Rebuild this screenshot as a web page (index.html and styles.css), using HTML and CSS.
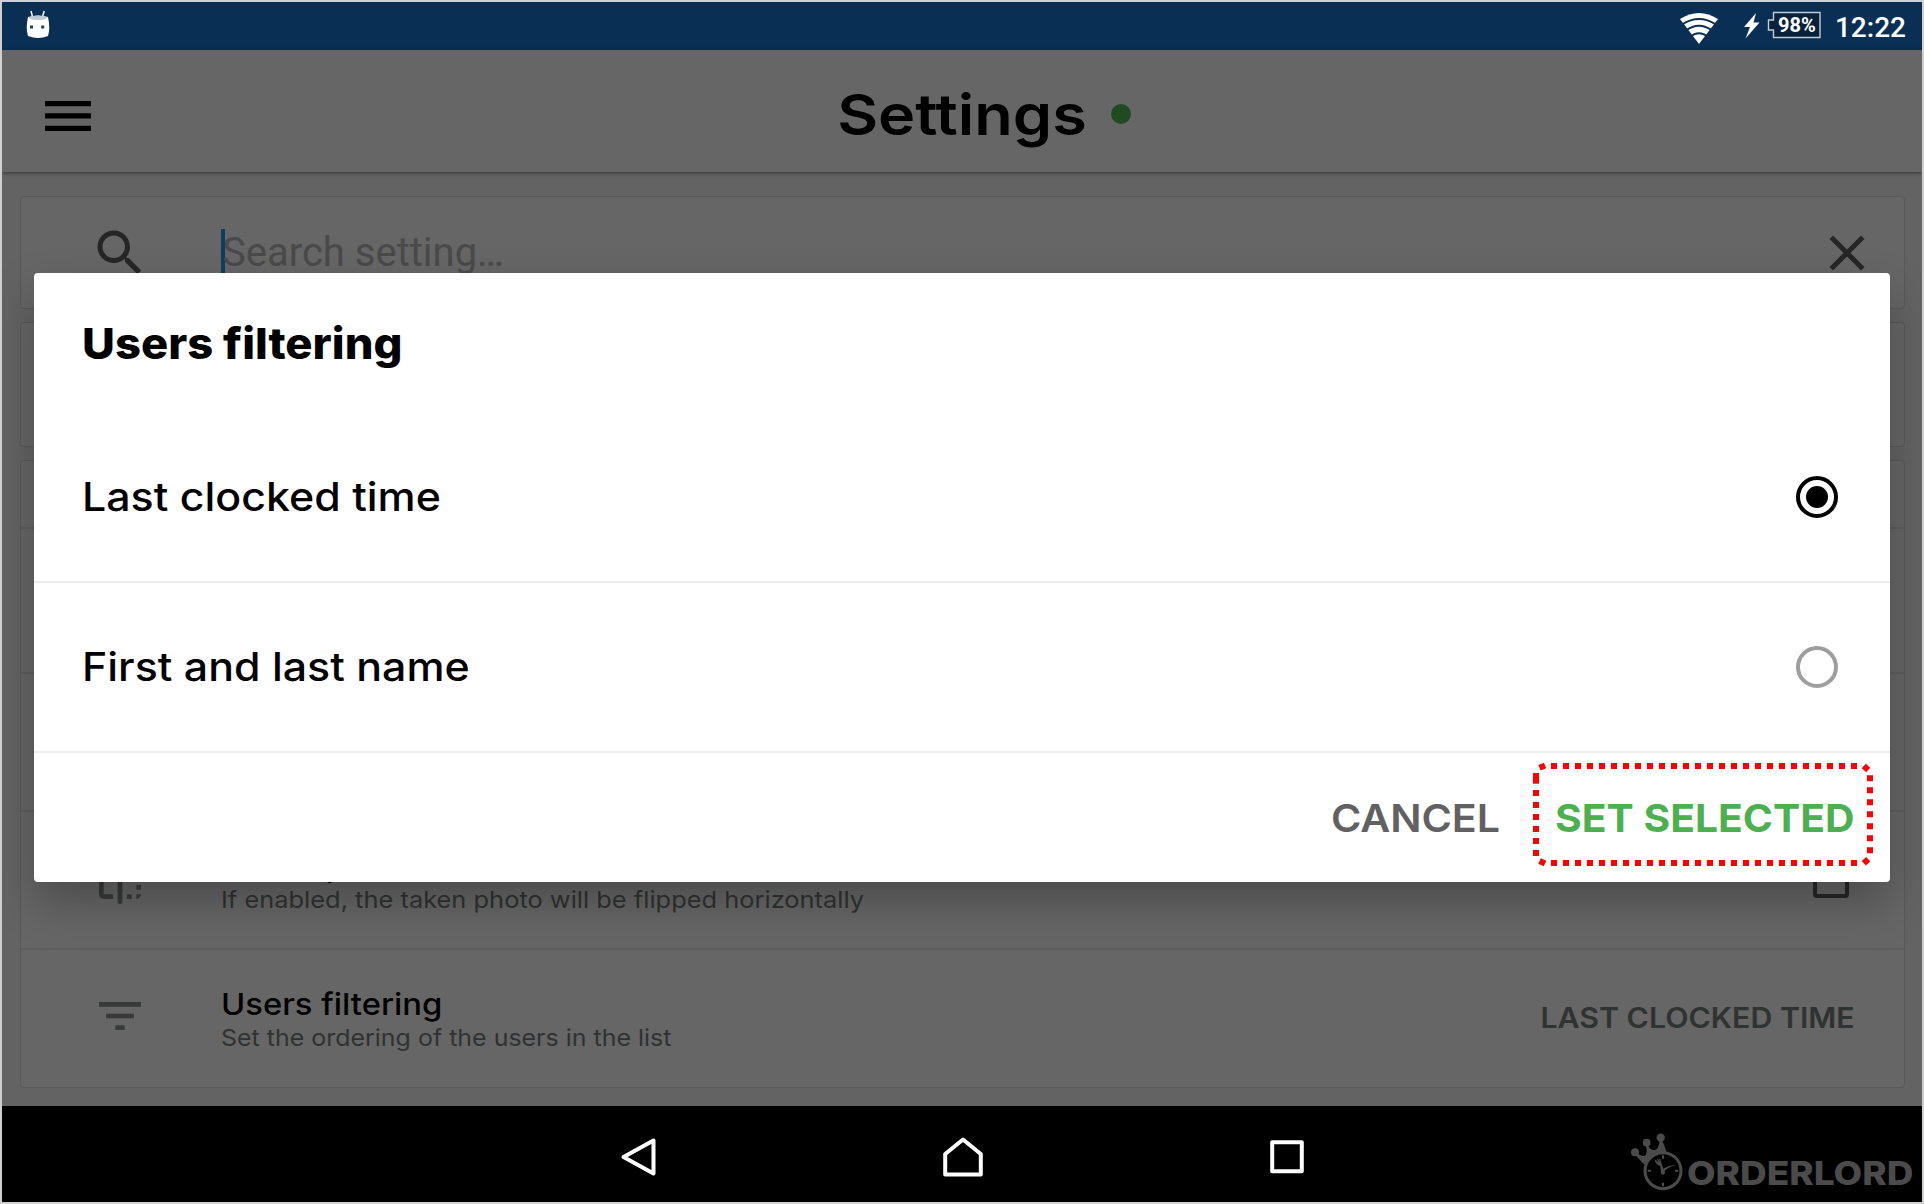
FILE: index.html
```html
<!DOCTYPE html>
<html lang="en">
<head>
<meta charset="utf-8">
<title>Settings</title>
<link rel="stylesheet" href="styles.css">
</head>
<body>
<div class="device">
  <header class="status">
    <svg class="status-robot" width="24" height="29" viewBox="0 0 24 29">
      <path d="M5 1l1.300 5M18.200 1l-1.500 5" stroke="#fff" stroke-width="1.500" fill="none"/>
      <path d="M2 7Q12 4 22 7Q24.500 18 22 26Q12 30 2 26Q-.500 18 2 7z" fill="#fff"/>
      <path d="M2.500 7.500Q12 3.500 21.500 7.500Q19 10 12 10T2.500 7.500z" fill="#bcc8d6"/>
      <path d="M4 15.500h3v3H4zM15.200 15.500h3v3h-3z" fill="#1c3f63"/>
    </svg>
    <div class="status-right">
      <svg class="wifi" width="40" height="33" viewBox="0 0 40 33">
        <path d="M1 7Q20-5 39 7L20 32z" fill="#fff"/>
        <path d="M3 12.500Q20 1.500 37 12.500M7 18.500Q20 9 33 18.500M11 25Q20 17.500 29 25" stroke="#0a2f54" stroke-width="2" fill="none"/>
      </svg>
      <svg class="bolt" width="16" height="26" viewBox="0 0 16 26"><path d="M12 0L0 14h6L1.500 25.500L15.500 9.500H9.500z" fill="#fff"/></svg>
      <div class="battery">
        <svg width="55" height="28" viewBox="0 0 55 28"><path d="M6.500 1.500h46.500v25H6.500v-7.500h-5v-10h5z" fill="#08223b" stroke="#c3ccd6" stroke-width="1.400"/></svg>
        <span class="battery-level">98%</span>
      </div>
      <span class="clock">12:22</span>
    </div>
  </header>

  <div class="toolbar">
    <svg class="menu" width="46" height="30" viewBox="0 0 46 30"><path d="M0 0h46v5.300H0zM0 12.300h46v5.300H0zM0 24.700h46v5.300H0z"/></svg>
    <h1 class="toolbar-title"><span class="wide">Settings</span><i class="online"></i></h1>
  </div>

  <main class="content">
    <section class="card search">
      <svg class="row-icon" width="60" height="60" viewBox="0 0 24 24"><path class="dark" d="M15.500 14h-.79l-.28-.27C15.410 12.590 16 11.110 16 9.500 16 5.910 13.090 3 9.500 3S3 5.910 3 9.500 5.910 16 9.500 16c1.610 0 3.090-.59 4.230-1.570l.27.28v.79l5 4.990L20.490 19l-4.990-5zm-6 0C7.010 14 5 11.990 5 9.500S7.010 5 9.500 5 14 7.010 14 9.500 11.990 14 9.500 14z"/></svg>
      <div class="search-field">Search setting…</div>
      <svg class="clear" width="60" height="60" viewBox="0 0 24 24"><path class="dark" d="M19 6.410L17.590 5 12 10.590 6.410 5 5 6.410 10.590 12 5 17.590 6.410 19 12 13.410 17.590 19 19 17.590 13.410 12z"/></svg>
    </section>
    <section class="card plain"></section>
    <section class="card list">
      <div class="row row-short"></div>
      <div class="row row-tall"></div>
      <div class="row"></div>
      <div class="row">
        <svg class="row-icon raised" width="56" height="56" viewBox="0 0 24 24"><path d="M15 21h2v-2h-2v2zm4-12h2V7h-2v2zM3 5v14c0 1.100.9 2 2 2h4v-2H5V5h4V3H5c-1.100 0-2 .9-2 2zm16-2v2h2c0-1.100-.9-2-2-2zm-8 20h2V1h-2v22zm8-6h2v-2h-2v2zM15 5h2V3h-2v2zm4 8h2v-2h-2v2zm0 8c1.100 0 2-.9 2-2h-2v2z"/></svg>
        <div class="row-text">
          <div class="row-title"><span class="wide">Mirror photo</span></div>
          <div class="row-sub"><span class="wide">If enabled, the taken photo will be flipped horizontally</span></div>
        </div>
        <i class="checkbox"></i>
      </div>
      <div class="row">
        <svg class="row-icon raised" width="56" height="56" viewBox="0 0 24 24"><path d="M10 18h4v-2h-4v2zM3 6v2h18V6H3zm3 7h12v-2H6v2z"/></svg>
        <div class="row-text">
          <div class="row-title"><span class="wide">Users filtering</span></div>
          <div class="row-sub"><span class="wide short">Set the ordering of the users in the list</span></div>
        </div>
        <span class="row-value">LAST CLOCKED TIME</span>
      </div>
    </section>
  </main>

  <nav class="navbar">
    <svg width="40" height="40" viewBox="0 0 40 40"><path d="M34.500 3.500v33L4.500 20z"/></svg>
    <svg width="40" height="40" viewBox="0 0 40 40"><path d="M2.200 37.500V17L20 2.500 37.800 17v20.500z"/></svg>
    <svg width="40" height="40" viewBox="0 0 40 40"><path d="M5.200 5.200h29.600v29H5.200z"/></svg>
    <div class="brand">
      <svg width="60" height="68" viewBox="0 0 180 204" fill="#4b4b4b">
        <circle cx="30" cy="73" r="12"/><circle cx="65" cy="44" r="11.500"/><circle cx="107" cy="29" r="12.500"/>
        <path d="M28 78L62 114Q78 76 125 73L111 34H104Q103 62 90 66Q76 68 68 50H62Q70 78 58 84Q46 86 35 72z"/>
        <circle cx="114" cy="128" r="54" fill="#000" stroke="#4b4b4b" stroke-width="9"/>
        <path d="M114 82v10M114 164v11M68 128h10M150 128h10" stroke="#4b4b4b" stroke-width="6"/>
        <path d="M107 110L114 134Q128 117 152 112Q132 110 114 124L108 110z"/>
        <path d="M108 134a6 6 0 1 0 12 0L111 110 106 94 102 92 105 103 99 92 96 94 101 105 92 95 89 99 97 110 106 114z"/>
      </svg>
      <span class="brand-name">ORDERLORD</span>
    </div>
  </nav>

  <div class="dialog" role="dialog">
    <h2 class="dialog-title"><span class="wide">Users filtering</span></h2>
    <div class="option"><span class="wide">Last clocked time</span><i class="radio checked"></i></div>
    <div class="option"><span class="wide">First and last name</span><i class="radio"></i></div>
    <div class="actions">
      <span class="action cancel">CANCEL</span>
      <span class="action confirm">SET SELECTED</span>
      <svg class="highlight" width="342" height="105" viewBox="0 0 342 105">
        <g stroke="#f00" stroke-width="6" fill="none" stroke-dasharray="6 6">
          <path d="M19 4H325M19 101H325M338 13.300V92M4 28V95"/>
        </g>
        <path fill="#f00" d="M1 11h6v10.700H1z"/>
        <g fill="#f00">
          <rect x="7.300" y="1.700" width="6" height="6" transform="rotate(-22 10.300 4.700)"/>
          <rect x="331" y="3" width="6" height="6" transform="rotate(42 334 6)"/>
          <rect x="331" y="96.300" width="6" height="6" transform="rotate(-42 334 99.300)"/>
          <rect x="7.300" y="97.300" width="6" height="6" transform="rotate(25 10.300 100.300)"/>
        </g>
      </svg>
    </div>
  </div>
</div>
</body>
</html>
```
FILE: styles.css
```css
* { box-sizing: border-box; }
body { margin: 0; font-family: Inter, "Open Sans", sans-serif; color: #000; }
h1, h2 { margin: 0; }

.device {
  position: relative;
  display: flex;
  flex-direction: column;
  width: 1924px;
  height: 1204px;
  border: 2px solid #d0d0d0;
  background: #636363;
  overflow: hidden;
}

/* horizontally extended lettering */
.wide { display: inline-block; white-space: nowrap; transform: scaleX(1.075); transform-origin: left center; }

/* status bar */
.status {
  display: flex;
  justify-content: space-between;
  flex: none;
  height: 48px;
  padding: 0 16px 0 24px;
  background: #0a2f54;
  color: #fff;
  font-family: Roboto, sans-serif;
}
.status-robot { margin-top: 8px; }
.status-right { display: flex; align-items: flex-start; }
.wifi { margin-top: 10px; }
.bolt { margin: 11px 7px 0 25px; }
.battery { position: relative; width: 55px; height: 28px; margin-top: 9px; }
.battery svg { display: block; }
.battery-level { position: absolute; left: 11px; top: 2px; font-size: 20px; line-height: 24px; font-weight: 700; }
.clock { margin: 10px 0 0 13px; font-size: 28px; line-height: 32px; font-weight: 500; }

/* toolbar */
.toolbar {
  position: relative;
  z-index: 1;
  display: grid;
  grid-template-columns: 1fr 252px 1fr;
  align-items: center;
  flex: none;
  height: 122px;
  padding: 0 43px;
  background: #666;
  box-shadow: 0 1px 4px rgba(0, 0, 0, .45);
}
.menu { margin-top: 9px; }
.toolbar-title { position: relative; padding-top: 8px; font-size: 57px; line-height: 70px; font-weight: 600; text-align: center; }
.toolbar-title .wide { transform: scaleX(1.105); transform-origin: center; }
.online { position: absolute; left: 275px; top: 32px; width: 20px; height: 20px; border-radius: 50%; background: #1f4a22; }

/* settings cards */
.content { display: flex; flex-direction: column; gap: 13px; flex: 1; padding: 24px 17px 18px 18px; }
.card { border: 1px solid #595959; border-radius: 4px; background: #666; }
.search { display: grid; grid-template-columns: 200px 1fr auto; align-items: center; height: 113px; padding-right: 27px; }
.row-icon { justify-self: center; fill: #393b3b; transform: translateX(-1px); }
.dark { fill: #262626; }
.raised { margin-bottom: 4px; }
.search-field { height: 48px; border-left: 4px solid #0d3d66; font: 40px/48px Roboto, sans-serif; color: #4a4a4a; text-indent: -3px; }
.plain { height: 125px; }
.list { flex: 1; }
.row { display: grid; grid-template-columns: 200px 1fr auto; align-items: center; height: 138px; padding-right: 49px; border-bottom: 2px solid #5e5e5e; }
.row-short { height: 68px; }
.row-tall { height: 145px; }
.row:last-child { height: 136px; border-bottom: 0; }
.row-title { font-size: 30.500px; line-height: 38px; font-weight: 500; }
.row-sub { padding-top: 1px; font-size: 23.500px; line-height: 28px; color: #303232; }
.row-sub .wide { transform: scaleX(1.082); }
.row-sub .short { transform: scaleX(1.062); }
.row-value { margin-bottom: 2px; font-size: 28.500px; font-weight: 600; color: #2f3331; transform: scaleX(1.063); transform-origin: right; }
.checkbox { width: 36px; height: 36px; margin-right: 6px; border: 4px solid #262626; border-radius: 4px; }

/* system navigation */
.navbar {
  position: relative;
  display: grid;
  grid-template-columns: repeat(3, 324px);
  place-content: center;
  place-items: center;
  flex: none;
  height: 96px;
  padding: 5px 0 0 1px;
  background: #000;
}
.navbar > svg { fill: none; stroke: #fff; stroke-width: 4; stroke-linejoin: round; }
.brand { position: absolute; left: 1623px; top: 22px; display: flex; }
.brand-name { margin: 25px 0 0 2px; font-size: 33px; line-height: 40px; font-weight: 800; color: #4b4b4b; transform: scaleX(1.12); transform-origin: left; }

/* dialog */
.dialog {
  position: absolute;
  z-index: 2;
  left: 32px;
  top: 271px;
  width: 1856px;
  height: 609px;
  border-radius: 4px;
  background: #fff;
  box-shadow: 0 20px 44px rgba(0, 0, 0, .26);
}
.dialog-title { height: 140px; padding: 44px 0 0 48px; font-size: 43px; line-height: 52px; font-weight: 800; }
.dialog-title .wide { transform: scaleX(1.054); }
.option { display: flex; align-items: center; justify-content: space-between; height: 170px; padding: 0 52px 0 48px; border-bottom: 2px solid #ededed; font-size: 39px; font-weight: 500; }
.option .wide { margin-bottom: 2px; transform: scaleX(1.1); }
.radio { display: grid; place-items: center; width: 42px; height: 42px; border: 4.500px solid #9e9e9e; border-radius: 50%; }
.radio.checked { border-color: #000; }
.radio.checked::after { content: ""; width: 22px; height: 22px; border-radius: 50%; background: #000; }
.actions { position: relative; display: flex; justify-content: flex-end; align-items: center; gap: 72px; height: 129px; padding-right: 35px; }
.action { font-size: 38.500px; font-weight: 600; transform: scaleX(1.07); transform-origin: right; }
.cancel { color: #616161; }
.confirm { color: #4caf50; font-weight: 700; transform: scaleX(1.06); }
.highlight { position: absolute; left: 1498px; top: 9px; }
```
